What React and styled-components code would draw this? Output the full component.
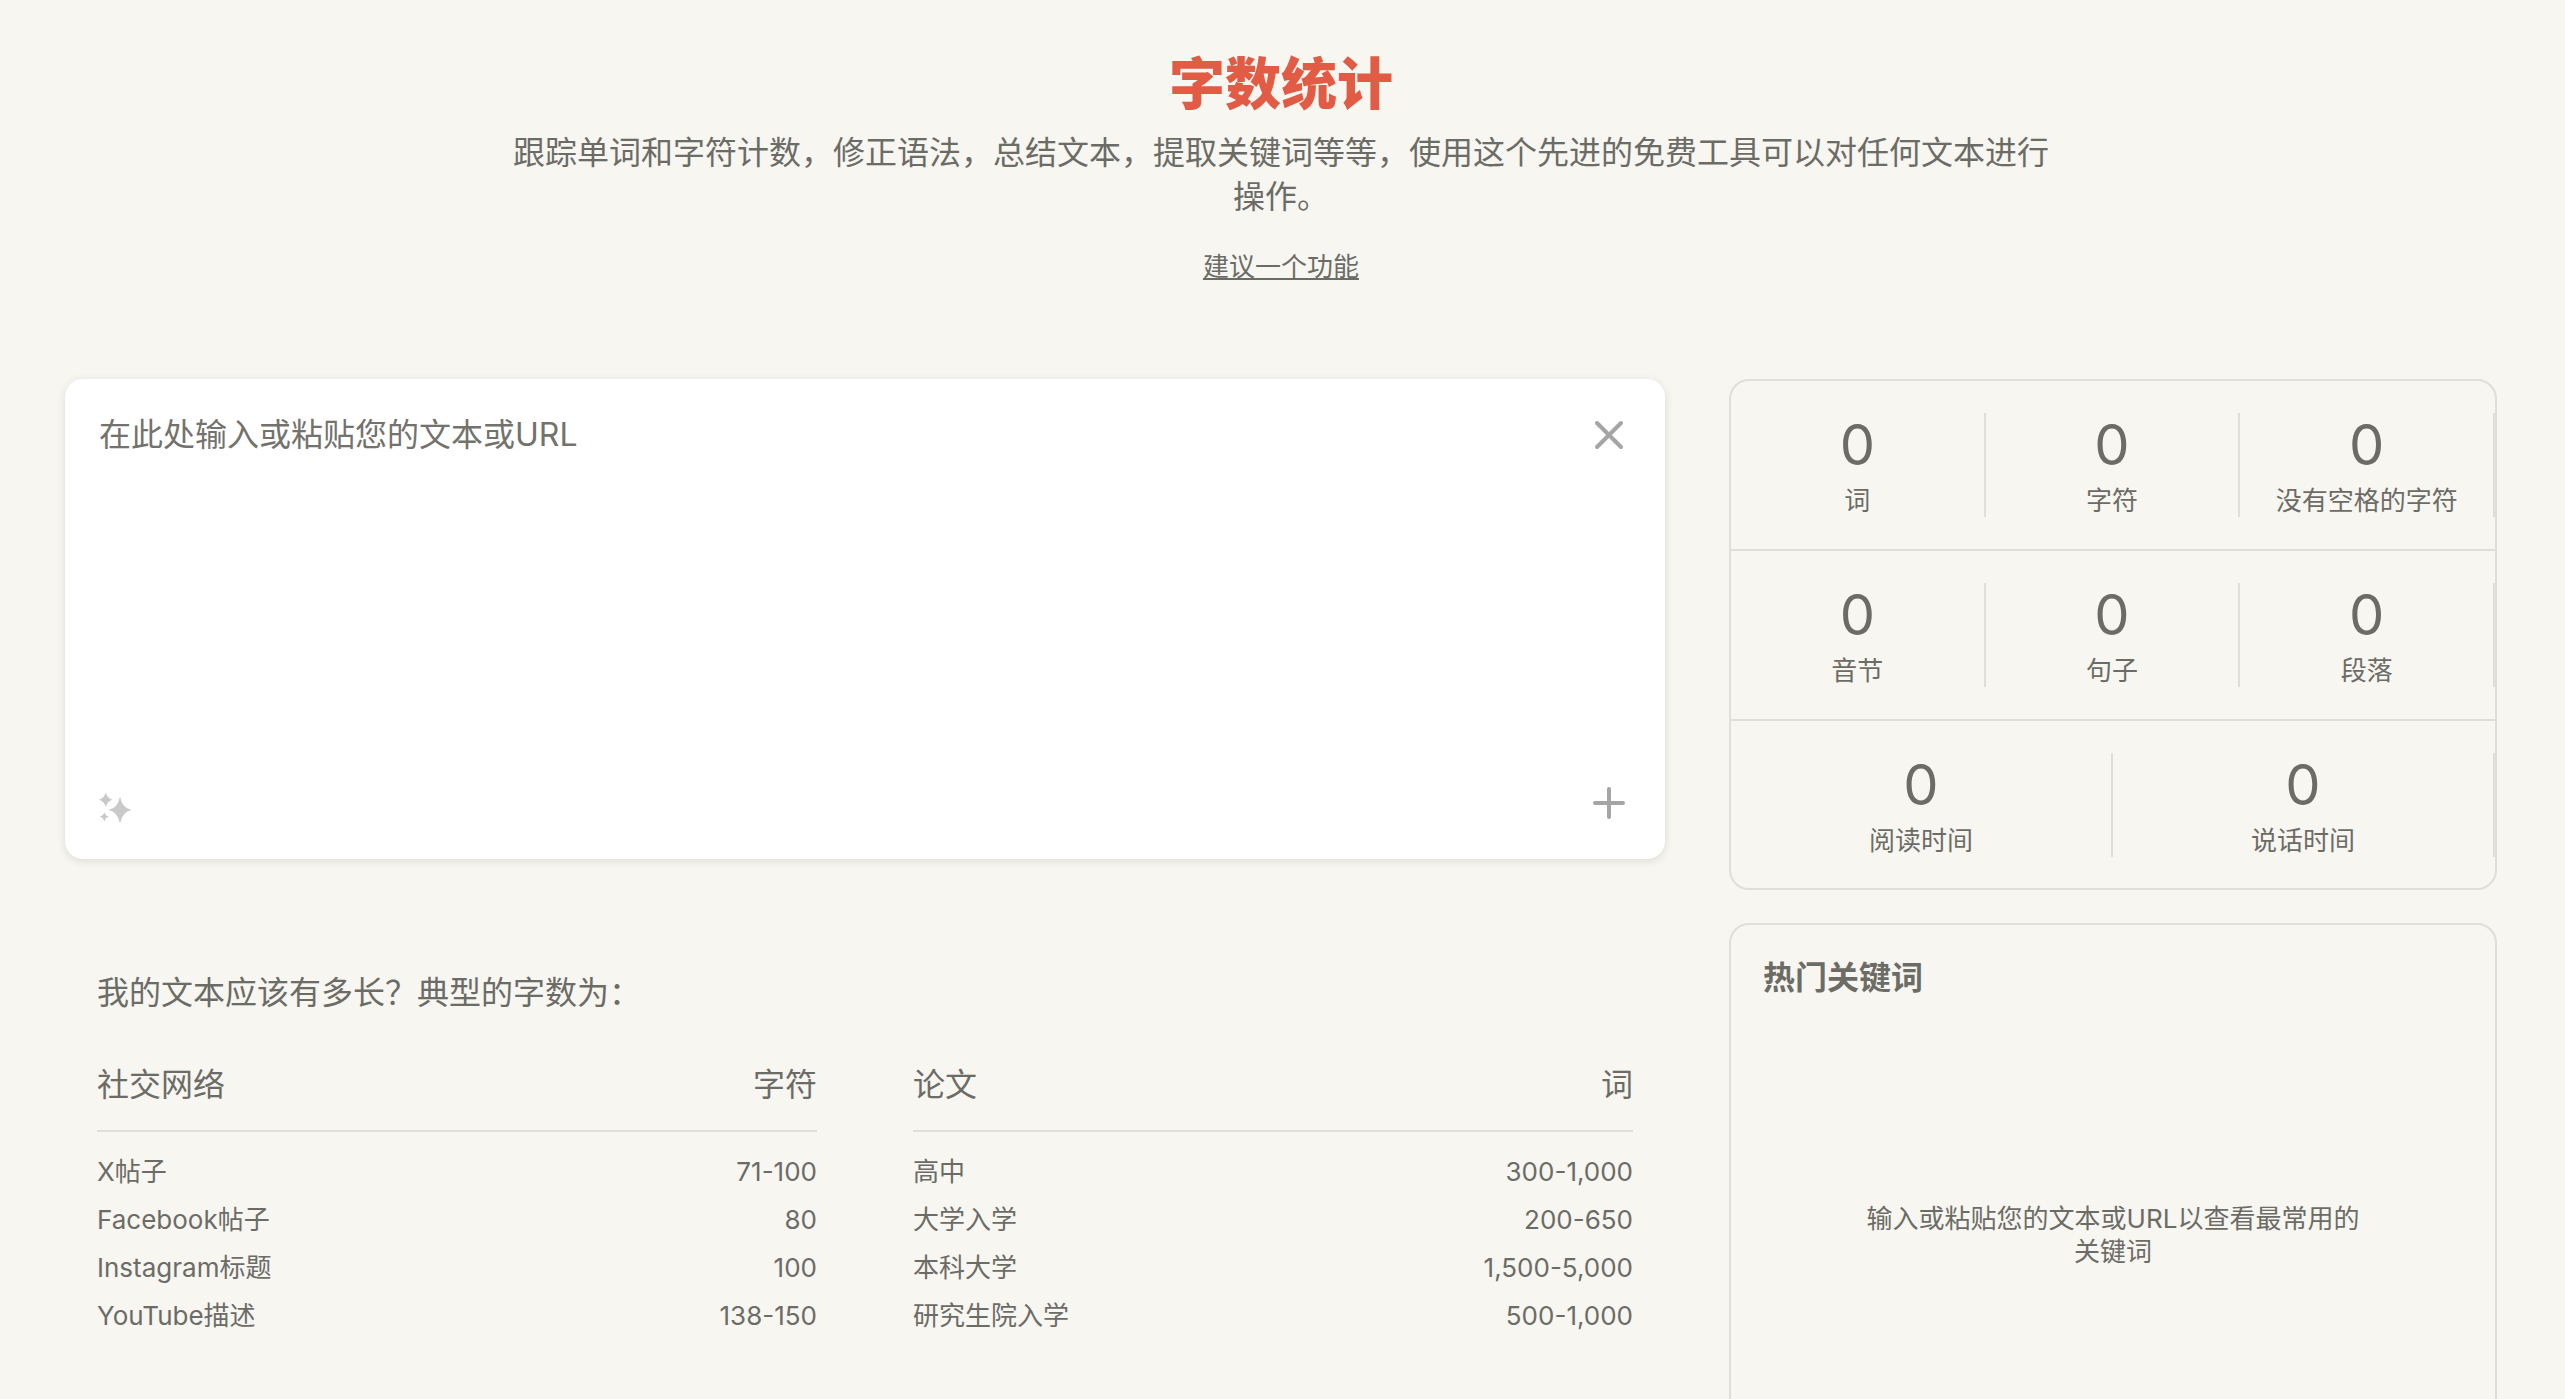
import React from 'react';
import styled, { createGlobalStyle } from 'styled-components';
import { X, Plus } from 'lucide-react';

const textColor = '#6c6c67';
const lineColor = '#dfdeda';

const GlobalStyle = createGlobalStyle`
    html, body {
        margin: 0;
        height: 100%;
        overflow: hidden;
        background: #f7f6f1;
    }
    body {
        font-family: Inter, "Noto Sans CJK SC", sans-serif;
        color: ${textColor};
    }
    * {
        box-sizing: border-box;
    }
`;

const Page = styled.div`
    height: 1399px;
    overflow: hidden;
    padding: 56px 68px 0 65px;
`;

const Header = styled.header`
    display: flex;
    flex-direction: column;
    align-items: center;
    text-align: center;
    height: 323px;
`;

const Title = styled.h1`
    margin: 0;
    font-size: 56px;
    line-height: 56px;
    font-weight: 900;
    color: #e25b44;
`;

const Subtitle = styled.p`
    margin: 19px 0 0;
    max-width: 1550px;
    font-size: 32px;
    line-height: 44px;
`;

const SuggestLink = styled.a`
    margin-top: 30px;
    font-size: 26px;
    line-height: 36px;
    color: ${textColor};
    text-decoration: underline;
`;

const Main = styled.main`
    display: grid;
    grid-template-columns: 1600px 768px;
    column-gap: 64px;
    align-items: start;
`;

const LeftColumn = styled.div`
    display: flex;
    flex-direction: column;
`;

const RightColumn = styled.aside`
    display: flex;
    flex-direction: column;
    gap: 33px;
`;

const Editor = styled.section`
    height: 480px;
    padding: 32px;
    display: flex;
    flex-direction: column;
    background: #fff;
    border-radius: 18px;
    box-shadow: 0 2px 8px rgba(60, 58, 50, 0.14);
`;

const EditorTop = styled.div`
    flex: 1;
    display: flex;
    gap: 20px;
`;

const EditorBottom = styled.div`
    display: flex;
    justify-content: space-between;
`;

const TextInput = styled.textarea`
    flex: 1;
    padding: 0 0 0 2px;
    border: none;
    outline: none;
    resize: none;
    background: transparent;
    font: inherit;
    font-size: 32px;
    line-height: 48px;
    color: ${textColor};

    &::placeholder {
        color: #73726d;
        opacity: 1;
    }
`;

const IconButton = styled.button`
    width: 48px;
    height: 48px;
    padding: 0;
    display: flex;
    border: none;
    background: none;
    color: #a5a5a5;
`;

const Guide = styled.section`
    margin-top: 110px;
    padding: 0 32px;
`;

const GuideTitle = styled.h2`
    margin: 0;
    font-size: 32px;
    line-height: 48px;
    font-weight: 400;
`;

const Tables = styled.div`
    margin-top: 44px;
    display: grid;
    grid-template-columns: 1fr 1fr;
    column-gap: 96px;
`;

const Table = styled.table`
    width: 100%;
    border-collapse: collapse;
`;

const HeadCell = styled.th`
    padding: 0 0 21px;
    border-bottom: 2px solid ${lineColor};
    font-size: 32px;
    line-height: 48px;
    font-weight: 400;
    text-align: ${({ $right }) => ($right ? 'right' : 'left')};
`;

const BodyCell = styled.td`
    padding: 0;
    font-size: 26px;
    line-height: 48px;
    text-align: ${({ $right }) => ($right ? 'right' : 'left')};
`;

const FirstRowGap = styled.tr`
    height: 17px;
`;

const StatsCard = styled.section`
    border: 2px solid ${lineColor};
    border-radius: 20px;
    overflow: hidden;
`;

const StatsRow = styled.div`
    height: 170px;
    padding: 32px 0 0;
    display: flex;
    align-items: flex-start;
    border-bottom: 2px solid ${lineColor};

    &:last-child {
        border-bottom: none;
        height: 167px;
    }
`;

const Stat = styled.div`
    flex: 1;
    height: 104px;
    text-align: center;
    border-right: 2px solid ${lineColor};
`;

const StatValue = styled.div`
    font-size: 56px;
    line-height: 64px;
`;

const StatLabel = styled.div`
    margin-top: 9px;
    font-size: 26px;
    line-height: 30px;
`;

const KeywordCard = styled.section`
    height: 700px;
    padding: 29px 32px 0;
    border: 2px solid ${lineColor};
    border-radius: 20px;
`;

const KeywordTitle = styled.h2`
    margin: 0;
    font-size: 32px;
    line-height: 48px;
    font-weight: 700;
`;

const KeywordEmpty = styled.p`
    margin: 200px auto 0;
    width: 500px;
    text-align: center;
    font-size: 26px;
    line-height: 33px;
`;

const statRows = [
    ['词', '字符', '没有空格的字符'],
    ['音节', '句子', '段落'],
    ['阅读时间', '说话时间'],
];

const socialRows = [
    ['X帖子', '71-100'],
    ['Facebook帖子', '80'],
    ['Instagram标题', '100'],
    ['YouTube描述', '138-150'],
];

const essayRows = [
    ['高中', '300-1,000'],
    ['大学入学', '200-650'],
    ['本科大学', '1,500-5,000'],
    ['研究生院入学', '500-1,000'],
];

const SparkleIcon = () => (
    <svg width="48" height="48" viewBox="0 0 48 48" fill="#c9c9c9">
        <path d="M23 17.500Q25 29 34.500 31Q25 33 23 44.500Q21 33 11.500 31Q21 29 23 17.500Z" />
        <path d="M8.700 13.500Q10.200 19.300 15.600 20.700Q10.200 22.100 8.700 27.900Q7.200 22.100 1.800 20.700Q7.200 19.300 8.700 13.500Z" />
        <path d="M7.300 33Q8.200 36.900 12 37.700Q8.200 38.500 7.300 42.400Q6.400 38.500 2.600 37.700Q6.400 36.900 7.300 33Z" />
    </svg>
);

const LengthTable = ({ name, unit, rows }) => (
    <Table>
        <thead>
            <tr>
                <HeadCell>{name}</HeadCell>
                <HeadCell $right>{unit}</HeadCell>
            </tr>
        </thead>
        <tbody>
            <FirstRowGap />
            {rows.map(([label, value]) => (
                <tr key={label}>
                    <BodyCell>{label}</BodyCell>
                    <BodyCell $right>{value}</BodyCell>
                </tr>
            ))}
        </tbody>
    </Table>
);

const App = () => (
    <Page>
        <GlobalStyle />
        <Header>
            <Title>字数统计</Title>
            <Subtitle>跟踪单词和字符计数，修正语法，总结文本，提取关键词等等，使用这个先进的免费工具可以对任何文本进行操作。</Subtitle>
            <SuggestLink href="#">建议一个功能</SuggestLink>
        </Header>
        <Main>
            <LeftColumn>
                <Editor>
                    <EditorTop>
                        <TextInput placeholder="在此处输入或粘贴您的文本或URL" />
                        <IconButton aria-label="清除"><X size={48} strokeWidth={2} /></IconButton>
                    </EditorTop>
                    <EditorBottom>
                        <SparkleIcon />
                        <IconButton aria-label="添加"><Plus size={48} strokeWidth={2} /></IconButton>
                    </EditorBottom>
                </Editor>
                <Guide>
                    <GuideTitle>我的文本应该有多长？典型的字数为：</GuideTitle>
                    <Tables>
                        <LengthTable name="社交网络" unit="字符" rows={socialRows} />
                        <LengthTable name="论文" unit="词" rows={essayRows} />
                    </Tables>
                </Guide>
            </LeftColumn>
            <RightColumn>
                <StatsCard>
                    {statRows.map((row, idx) => (
                        <StatsRow key={idx}>
                            {row.map((label) => (
                                <Stat key={label}>
                                    <StatValue>0</StatValue>
                                    <StatLabel>{label}</StatLabel>
                                </Stat>
                            ))}
                        </StatsRow>
                    ))}
                </StatsCard>
                <KeywordCard>
                    <KeywordTitle>热门关键词</KeywordTitle>
                    <KeywordEmpty>输入或粘贴您的文本或URL以查看最常用的关键词</KeywordEmpty>
                </KeywordCard>
            </RightColumn>
        </Main>
    </Page>
);

export default App;
